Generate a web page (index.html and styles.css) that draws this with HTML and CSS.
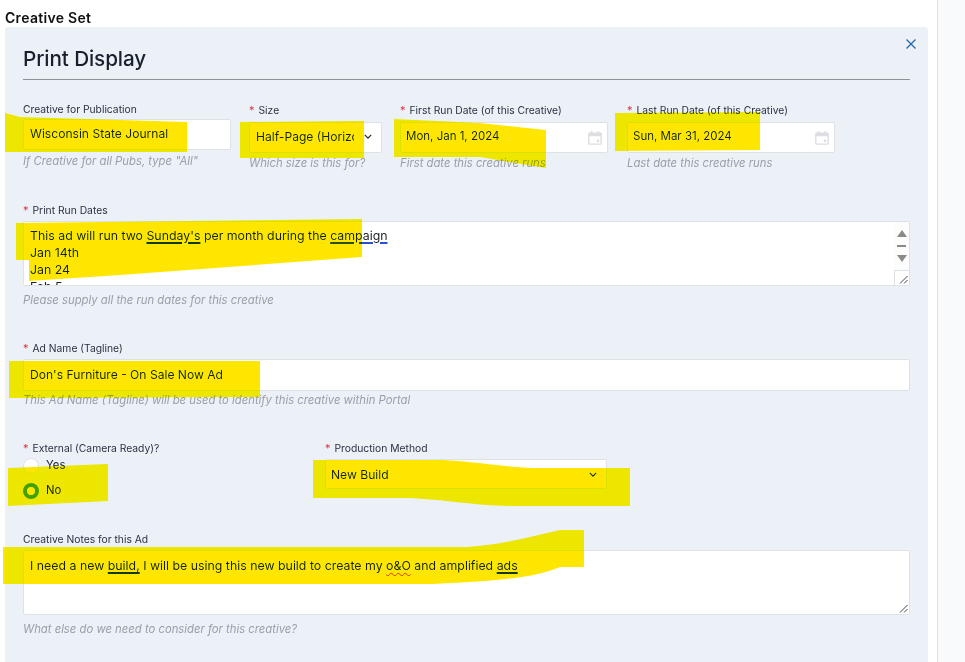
FILE: index.html
```html
<!DOCTYPE html>
<html lang="en">
<head>
<meta charset="utf-8">
<title>Creative Set</title>
<link rel="stylesheet" href="styles.css">
</head>
<body>
<div class="page">
  <main class="main">
    <h2 class="set-title">Creative Set</h2>
    <section class="panel">
      <button class="close" aria-label="Close"><svg viewBox="0 0 12 12" width="12" height="12"><path d="M1.5 1.5l9 9M10.5 1.5l-9 9" fill="none" stroke="#2b6cab" stroke-width="1.4"/></svg></button>
      <h1 class="panel-title">Print Display</h1>
      <div class="row row-top">
        <div class="field f-pub">
          <label class="label label-up">Creative for Publication</label>
          <div class="box box-up">Wisconsin State Journal</div>
          <p class="hint hint-up">If Creative for all Pubs, type "All"</p>
        </div>
        <div class="field f-size">
          <label class="label"><span class="req">*</span>Size</label>
          <div class="box box-select box-size"><span class="clip">Half-Page (Horizontal)</span><svg class="chev" viewBox="0 0 10 6" width="8" height="5"><path d="M1 1l4 4 4-4" fill="none" stroke="#222" stroke-width="1.5"/></svg></div>
          <p class="hint">Which size is this for?</p>
        </div>
        <div class="field f-date">
          <label class="label"><span class="req">*</span>First Run Date (of this Creative)</label>
          <div class="box box-select box-date">Mon, Jan 1, 2024<svg class="cal" viewBox="0 0 14 14" width="16" height="16"><path d="M1 3.2a1 1 0 0 1 1-1h1.4V.8h1.4v1.4h4.4V.8h1.4v1.4H12a1 1 0 0 1 1 1V12a1 1 0 0 1-1 1H2a1 1 0 0 1-1-1zM2.200 5.400V11.800h9.600V5.400zM8.600 8.400h2v2h-2z" fill="#dcdee1" fill-rule="evenodd"/></svg></div>
          <p class="hint">First date this creative runs</p>
        </div>
        <div class="field f-date">
          <label class="label"><span class="req">*</span>Last Run Date (of this Creative)</label>
          <div class="box box-select box-date">Sun, Mar 31, 2024<svg class="cal" viewBox="0 0 14 14" width="16" height="16"><path d="M1 3.2a1 1 0 0 1 1-1h1.4V.8h1.4v1.4h4.4V.8h1.4v1.4H12a1 1 0 0 1 1 1V12a1 1 0 0 1-1 1H2a1 1 0 0 1-1-1zM2.200 5.400V11.800h9.600V5.400zM8.600 8.400h2v2h-2z" fill="#dcdee1" fill-rule="evenodd"/></svg></div>
          <p class="hint">Last date this creative runs</p>
        </div>
      </div>

      <div class="field f-dates">
        <label class="label"><span class="req">*</span>Print Run Dates</label>
        <div class="box area area-dates">
          <div>This ad will run two <u class="gram">Sunday's</u> per month during the <u class="gram-blue">campaign</u></div>
          <div>Jan 14th</div>
          <div>Jan 24</div>
          <div>Feb 5</div>
          <div class="scrollbar">
            <i class="tri-up"></i><i class="dash"></i><i class="tri-down"></i>
          </div>
          <div class="grip"><svg viewBox="0 0 15 15" width="15" height="15"><path d="M6 13.500L13.500 6M10 13.500l3.500-3.500" stroke="#444" stroke-width="1" fill="none"/></svg></div>
        </div>
        <p class="hint hint-low">Please supply all the run dates for this creative</p>
      </div>

      <div class="field f-name">
        <label class="label"><span class="req">*</span>Ad Name (Tagline)</label>
        <div class="box">Don's Furniture - On Sale Now Ad</div>
        <p class="hint">This Ad Name (Tagline) will be used to identify this creative within Portal</p>
      </div>

      <div class="row row-choice">
        <div class="field f-ext">
          <label class="label"><span class="req">*</span>External (Camera Ready)?</label>
          <div class="radio radio-first"><i class="dot"></i><span>Yes</span></div>
          <div class="radio"><i class="dot dot-on"></i><span>No</span></div>
        </div>
        <div class="field f-method">
          <label class="label"><span class="req">*</span>Production Method</label>
          <div class="box box-select box-method">New Build<svg class="chev" viewBox="0 0 10 6" width="8" height="5"><path d="M1 1l4 4 4-4" fill="none" stroke="#222" stroke-width="1.5"/></svg></div>
        </div>
      </div>

      <div class="field f-notes">
        <label class="label">Creative Notes for this Ad</label>
        <div class="box area area-notes">
          <div>I need a new <u class="gram">build,</u> I will be using this new build to create my <u class="spell">o&amp;O</u> and amplified <u class="gram">ads</u></div>
          <div class="grip grip-plain"><svg viewBox="0 0 15 15" width="15" height="15"><path d="M6 13.500L13.500 6M10 13.500l3.500-3.500" stroke="#444" stroke-width="1" fill="none"/></svg></div>
        </div>
        <p class="hint hint-notes">What else do we need to consider for this creative?</p>
      </div>
    </section>
  </main>
  <aside class="side"></aside>

  <svg class="marker" viewBox="0 0 965 662" width="965" height="662" aria-hidden="true">
    <path d="M5 113L20 117L187 122V152H5Z"/>
    <path d="M240 122L364 121V158H240Z"/>
    <path d="M394 119L480 123L546 130V168L480 157H394Z"/>
    <path d="M615 113L760 112V150L615 151Z"/>
    <path d="M16 223L362 219V257L120 275L29 281V260H16Z"/>
    <path d="M9 361L260 361V397L9 398Z"/>
    <path d="M8 468L108 464V501L8 506Z"/>
    <path d="M313 460H443C490 463 510 468 540 468H630V506H517C470 506 440 498 400 498H327L313 498Z"/>
    <path d="M3 547H467C500 545 530 537 560 530H584V567H560C540 575 520 580 433 584H3Z"/>
  </svg>
</div>
</body>
</html>
```
FILE: styles.css
```css
* { box-sizing: border-box; }
html, body { margin: 0; padding: 0; height: 100%; overflow: hidden; background: #fff; }
body { font-family: Inter, "Noto Sans", sans-serif; color: #1f2733; }
.page { position: relative; display: flex; width: 965px; height: 662px; overflow: hidden; }
.main { width: 937px; padding-left: 5px; padding-top: 9px; background: #fff; }
.side { width: 28px; background: #f9fafc; border-left: 1px solid #dfe1e5; }
.set-title { margin: 0; height: 18px; font-size: 14px; line-height: 18px; font-weight: 600; letter-spacing: .3px; color: #111; }
.panel { position: relative; width: 923px; height: 640px; padding: 0 18px; background: #ecf1f8; border-radius: 3px 3px 0 0; }
.close { position: absolute; top: 11px; right: 11px; width: 12px; height: 12px; padding: 0; border: 0; background: none; }
.close svg { display: block; }
.panel-title { margin: 0; height: 53px; padding-top: 18px; font-size: 20.700px; line-height: 27px; font-weight: 500; letter-spacing: -.1px; color: #17202b; border-bottom: 1px solid #8f9296; }
.row { display: flex; }
.row-top { margin-top: 23px; gap: 18px; height: 83px; }
.row-top .field { flex: none; }
.f-pub { width: 208px; }
.f-size { width: 133px; }
.f-date { width: 208px; }
.row-top .f-date + .f-date { margin-left: 1px; }
.label { display: block; height: 12px; font-size: 10.300px; line-height: 12px; color: #2a3240; white-space: nowrap; margin-top: 1px; }
.label-up { margin-top: 0; }
.req { color: #e0343f; font-size: 11px; margin-right: 4px; }
.box { position: relative; height: 31px; margin-top: 5px; padding: 0 6px; background: #fff; border: 1px solid #dee1e6; border-radius: 2px; font-size: 12.100px; line-height: 29px; color: #1b1f26; white-space: nowrap; }
.box-up { margin-top: 4px; line-height: 28px; }
.box-select { margin-top: 6px; padding-bottom: 2px; display: flex; align-items: center; justify-content: space-between; }
.box-date { font-size: 11.500px; padding-left: 5px; }
.clip { display: block; width: 98px; overflow: hidden; }
.chev { flex: none; margin-right: 3px; }
.cal { flex: none; margin-right: -2px; margin-top: 2px; }
.hint { margin: 4px 0 0; font-size: 11.300px; line-height: 13px; font-style: italic; color: #9a9ea6; white-space: nowrap; }
.hint-up { margin-top: 5px; }
.hint-low { margin-top: 8px; }
.hint-notes { margin-top: 8px; }
.f-dates { margin-top: 18px; }
.area { height: 65px; overflow: hidden; white-space: normal; font-size: 12.350px; line-height: 17px; padding-top: 5px; }
.area-notes { padding-top: 6px; }
.area-notes, .area-dates { margin-top: 5px; }
.scrollbar { position: absolute; top: 0; right: 0; width: 15px; height: 48px; background: #fcfcfd; display: flex; flex-direction: column; align-items: center; padding-top: 8px; }
.tri-up, .tri-down { display: block; width: 0; height: 0; border-left: 5px solid transparent; border-right: 5px solid transparent; }
.tri-up { border-bottom: 7px solid #8a8a8a; }
.tri-down { border-top: 7px solid #8a8a8a; }
.dash { display: block; width: 9px; height: 2px; margin: 8px 0; background: #8a8a8a; }
.grip { position: absolute; right: 0; bottom: 0; width: 15px; height: 15px; background: #fff; border-left: 1px solid #dee1e6; border-top: 1px solid #dee1e6; line-height: 0; }
.grip svg { margin: -1px 0 0 -1px; }
.grip-plain { border: 0; }
.grip-plain svg { margin: 0; }
u { text-decoration-thickness: 1px; text-underline-offset: 2px; }
.gram { text-decoration-color: #123a10; text-decoration-thickness: 1.500px; }
.gram-blue { text-decoration-color: #2a50d0; text-decoration-thickness: 1.500px; }
.spell { text-decoration: underline wavy #e02a20 1px; text-underline-offset: 2px; }
.f-name { margin-top: 35px; }
.f-name .box { margin-top: 5px; height: 32px; line-height: 30px; }
.f-name .hint { margin-top: 3px; }
.row-choice { margin-top: 34px; height: 91px; }
.f-ext { width: 302px; }
.f-method { width: 282px; }
.box-method { height: 30px; margin-top: 5px; padding-bottom: 0; padding-left: 5px; }
.radio { display: flex; align-items: center; height: 25px; font-size: 11.300px; color: #1b1f26; }
.radio span { margin-left: 7px; margin-top: -2px; }
.radio-first { margin-top: -1px; }
.dot { flex: none; width: 16px; height: 16px; border-radius: 50%; background: #fff; border: 1px solid #dde0e4; }
.dot-on { border: 4px solid #43a000; background: #fff; }
.f-notes { margin-top: 0; }
.f-notes .box { margin-top: 5px; }
.marker { position: absolute; top: 0; left: 0; pointer-events: none; mix-blend-mode: darken; }
.marker path { fill: #ffe600; }
```
